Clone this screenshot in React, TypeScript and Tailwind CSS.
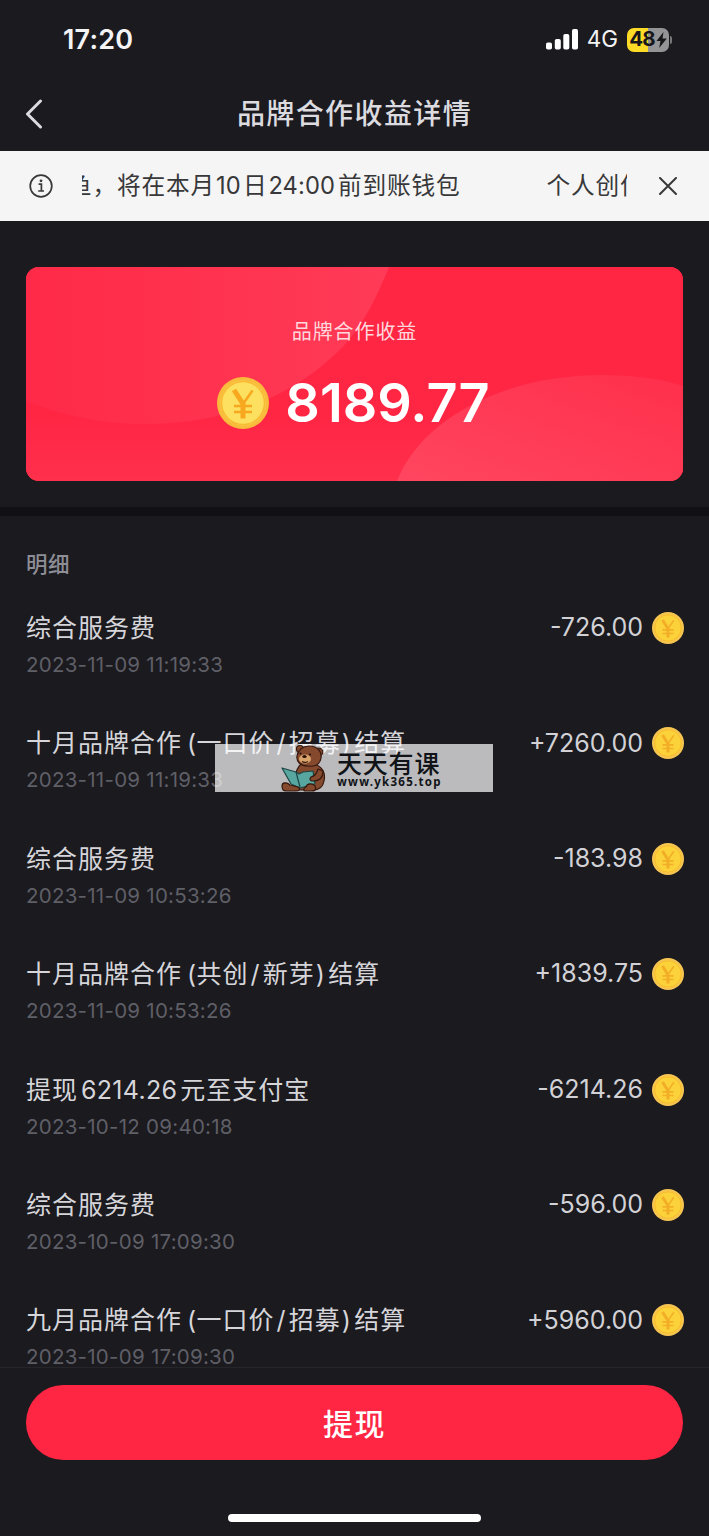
import React from 'react';

type Part = string | { latin: string; gap: string };

const records: { title: Part[]; time: string; amount: string }[] = [
    { title: ['综合服务费'], time: '2023-11-09 11:19:33', amount: '-726.00' },
    {
        title: [
            '十月品牌合作',
            { latin: '(', gap: 'pl-[5px]' },
            '一口价',
            { latin: '/', gap: 'pl-[2px] pr-[3px]' },
            '招募',
            { latin: ')', gap: 'pl-[1px] pr-[3px]' },
            '结算',
        ],
        time: '2023-11-09 11:19:33',
        amount: '+7260.00',
    },
    { title: ['综合服务费'], time: '2023-11-09 10:53:26', amount: '-183.98' },
    {
        title: [
            '十月品牌合作',
            { latin: '(', gap: 'pl-[5px]' },
            '共创',
            { latin: '/', gap: 'pl-[2px] pr-[3px]' },
            '新芽',
            { latin: ')', gap: 'pl-[1px] pr-[3px]' },
            '结算',
        ],
        time: '2023-11-09 10:53:26',
        amount: '+1839.75',
    },
    {
        title: ['提现', { latin: '6214.26', gap: 'px-[3px]' }, '元至支付宝'],
        time: '2023-10-12 09:40:18',
        amount: '-6214.26',
    },
    { title: ['综合服务费'], time: '2023-10-09 17:09:30', amount: '-596.00' },
    {
        title: [
            '九月品牌合作',
            { latin: '(', gap: 'pl-[5px]' },
            '一口价',
            { latin: '/', gap: 'pl-[2px] pr-[3px]' },
            '招募',
            { latin: ')', gap: 'pl-[1px] pr-[3px]' },
            '结算',
        ],
        time: '2023-10-09 17:09:30',
        amount: '+5960.00',
    },
];

function Coin({ className, face = '#fcd23a', rim = '#f6c452', mark = '#f3ae28' }: { className: string; face?: string; rim?: string; mark?: string }) {
    return (
        <svg viewBox="0 0 52 52" className={className} fill="none">
            <circle cx="26" cy="26" r="26" fill={rim} />
            <circle cx="26" cy="26" r="22.5" fill={face} />
            <circle cx="26" cy="26" r="21.5" stroke={mark} strokeWidth="1.5" opacity="0.7" />
            <path d="M26 27l9.5-13.5M17 29h18M17 35h18" stroke={mark} strokeWidth="2.6" />
            <path d="M17 13 26 27v14.5" stroke={mark} strokeWidth="5" />
        </svg>
    );
}

function StatusBar() {
    return (
        <div className="flex h-[76px] items-center justify-between pl-[63px] pr-[37px] pt-[3px]">
            <span className="text-[27px] font-semibold leading-none tracking-[0.2px] text-[#f4f4f4]">17:20</span>
            <div className="flex items-center">
                <svg viewBox="0 0 32 21" className="h-[21px] w-8" fill="#fff">
                    <rect x="0" y="13.5" width="6" height="7" rx="1.8" />
                    <rect x="8.8" y="10" width="6" height="10.5" rx="1.8" />
                    <rect x="17.3" y="5" width="6" height="15.5" rx="1.8" />
                    <rect x="26" y="0" width="6" height="20.5" rx="1.8" />
                </svg>
                <span className="ml-[9px] text-[22.5px] leading-none text-[#f4f4f4]">4G</span>
                <div className="ml-[9px] flex h-6 w-[42px] items-center justify-center rounded-[7px] bg-linear-to-r from-[#fbdb25] from-50% to-[#949496] to-50%">
                    <span className="text-[20.5px] font-bold leading-none tracking-[-0.9px] text-[#17171b]">48</span>
                    <svg viewBox="0 0 11 16" className="ml-px h-4 w-[11px]" fill="#17171b">
                        <path d="M7.5 0 .5 9h4L3.2 16 10.8 6.5H6.5z" />
                    </svg>
                </div>
                <span className="ml-px h-2 w-[2px] rounded-r-full bg-[#77777a]" />
            </div>
        </div>
    );
}

function Notice() {
    return (
        <div className="flex h-[70px] items-center bg-[#f5f5f5] pl-[29px] pr-[32px] text-[#38383a]">
            <svg viewBox="0 0 24 24" className="size-6" fill="none" stroke="currentColor" strokeWidth="1.7">
                <circle cx="12" cy="12" r="10.8" />
                <path d="M9.6 10.2h2.8v6.6M9.2 17h5.8" />
                <circle cx="12" cy="6.8" r="1.4" fill="currentColor" stroke="none" />
            </svg>
            <div className="ml-[29px] flex w-[545px] overflow-hidden whitespace-nowrap text-[23.7px] tracking-[0.8px]">
                <span className="-ml-[14px] mr-px">鱼，将在本月</span>
                <span className="tracking-[0.2px]">10</span>
                <span className="pl-[2px]">日</span>
                <span className="pl-px pr-[3px] tracking-[0.1px]">24:00</span>
                <span>前到账钱包</span>
                <span className="ml-[86px]">个人创作者</span>
            </div>
            <svg viewBox="0 0 18 18" className="ml-auto size-[18px]" stroke="currentColor" strokeWidth="2" strokeLinecap="round">
                <path d="M1 1l16 16M17 1 1 17" />
            </svg>
        </div>
    );
}

function BalanceCard() {
    return (
        <div className="relative mx-[26px] mt-[46px] h-[214px] overflow-hidden rounded-[13px] bg-[#ff2644]">
            <svg viewBox="0 0 657 214" className="absolute inset-0 h-full w-full">
                <defs>
                    <linearGradient id="glow" x1="0" y1="0" x2="1" y2="0">
                        <stop offset="0" stopColor="#ff2a47" />
                        <stop offset="1" stopColor="#ff3b57" />
                    </linearGradient>
                    <linearGradient id="floor" x1="0" y1="0" x2="0" y2="1">
                        <stop offset="0.7" stopColor="#ff2644" />
                        <stop offset="1" stopColor="#ff304c" />
                    </linearGradient>
                    <linearGradient id="hill" x1="1" y1="0" x2="0" y2="1">
                        <stop offset="0" stopColor="#ff2f4b" />
                        <stop offset="1" stopColor="#ff4660" />
                    </linearGradient>
                </defs>
                <rect width="657" height="214" fill="url(#floor)" />
                <path d="M0 0H363C349 34 334 66 306 90C262 131 196 157 122 157C76 157 38 149 0 134Z" fill="url(#glow)" />
                <path d="M371 214C395 152 478 108 576 108C608 108 636 112 657 119V214Z" fill="url(#hill)" />
            </svg>
            <div className="relative flex h-full flex-col items-center">
                <p className="mt-[50px] text-[20px] leading-[30px] tracking-[0.9px] text-[#ffd8dd]">品牌合作收益</p>
                <div className="mt-[29px] flex items-center pr-[2px]">
                    <Coin className="size-[52px]" face="#fde05f" rim="#f8bb3c" mark="#f7a81f" />
                    <span className="ml-[16px] pt-px text-[54px] font-semibold leading-[52px] text-white">8189.77</span>
                </div>
            </div>
        </div>
    );
}

function Watermark() {
    return (
        <div className="absolute left-[215px] top-[744px] flex h-12 w-[278px] bg-white/70 text-[#101418]">
            <svg viewBox="0 0 46 48" className="ml-[66px] h-12 w-[46px]" fill="#85492e" stroke="#35190f" strokeWidth="1.2" strokeLinejoin="round">
                <circle cx="19" cy="5" r="3.5" />
                <circle cx="38" cy="8" r="3.8" />
                <path d="M33 20c8 2 12 9 10 17-1 6-5 9-11 9H14c-2-8 0-20 6-26z" />
                <path d="M28 2c9 0 13 6 12 12-1 7-7 9-13 8-7 0-12-4-11-10 1-6 6-10 12-10z" />
                <ellipse cx="24" cy="15" rx="6" ry="4.6" fill="#d9a36c" stroke="none" />
                <ellipse cx="23.5" cy="12.5" rx="2.2" ry="1.5" fill="#2a130c" stroke="none" />
                <circle cx="19.5" cy="9.5" r="1" fill="#1a0c08" stroke="none" />
                <circle cx="29" cy="10.5" r="1" fill="#1a0c08" stroke="none" />
                <path d="M21 17.5c2 1.3 4 1.2 6 0" fill="none" />
                <path d="M1 24l14 4 3 2 4-2 10-1 2 13-15 4-9-4z" fill="#58a6a0" stroke="#1c4544" />
                <path d="M15 28l4 15" stroke="#1c4544" fill="none" />
                <path d="M42 27c0 7-4 10-10 10-3 0-4-2-2-4 4-1 6-4 7-8z" />
                <path d="M1 42c0-4 5-4 8-1l8 2c3 2 1 4-2 4H5c-3 0-4-2-4-5z" />
                <path d="M25 43c1-4 7-4 9-1 2 4 0 5-4 5h-5c-3 0-3-3 0-4z" />
            </svg>
            <div className="ml-[10px] flex flex-col">
                <span className="mt-[5px] font-['Noto_Sans_CJK_SC'] text-[25px] font-medium leading-[26px] tracking-[0.8px]">天天有课</span>
                <span className="font-['Noto_Sans'] text-[11.5px] font-bold leading-[14px] tracking-[1.25px]">www.yk365.top</span>
            </div>
        </div>
    );
}

export default function App() {
    return (
        <div className="relative flex h-[1536px] w-[709px] flex-col overflow-hidden bg-[#1b1a1f] font-[Inter,'Noto_Sans_CJK_SC',sans-serif]">
            <StatusBar />

            {/* Title bar */}
            <header className="grid h-[75px] grid-cols-[80px_1fr_80px] items-center text-[#dcdce0]">
                <svg viewBox="0 0 18 30" className="ml-[25px] h-[30px] w-[18px]" fill="none" stroke="currentColor" strokeWidth="3" strokeLinecap="round" strokeLinejoin="round">
                    <path d="M15.5 2 2.5 15l13 13" />
                </svg>
                <h1 className="text-center text-[28px] font-medium leading-[40px] tracking-[1.4px]">品牌合作收益详情</h1>
            </header>

            <Notice />
            <BalanceCard />
            <div className="mt-[26px] h-[9px] shrink-0 bg-[#111115]" />

            {/* Records */}
            <main className="flex h-[851px] shrink-0 flex-col overflow-hidden pl-[26px] pr-[25px]">
                <h2 className="mt-[33px] text-[21.5px] font-medium leading-[30px] tracking-[0.5px] text-[#8e8e96]">明细</h2>
                <ul className="mt-[30px]">
                    {records.map((record, row) => (
                        <li key={row} className="flex h-[115.4px] justify-between">
                            <div>
                                <p className="whitespace-nowrap text-[25px] leading-[38px] tracking-[1px] text-[#d6d6da]">
                                    {record.title.map((part, i) =>
                                        typeof part === 'string' ? (
                                            part
                                        ) : (
                                            <span key={i} className={`tracking-[0.3px] ${part.gap}`}>
                                                {part.latin}
                                            </span>
                                        )
                                    )}
                                </p>
                                <p className="mt-[2px] text-[20.5px] leading-[32px] tracking-[0.25px] text-[#5f5f67]">{record.time}</p>
                            </div>
                            <div className="flex h-[38px] items-center">
                                <span className="text-[25px] text-[#d2d2d6]">{record.amount}</span>
                                <Coin className="ml-[9px] size-[32px]" />
                            </div>
                        </li>
                    ))}
                </ul>
            </main>

            {/* Withdraw */}
            <footer className="flex flex-1 flex-col items-center border-t border-[#25252a] px-[26px] pt-[17px]">
                <button className="h-[75px] w-full rounded-full bg-[#ff2644] pt-[3px] text-[30px] font-medium tracking-[1.5px] text-white">提现</button>
                <div className="mt-[54px] h-2 w-[253px] rounded-full bg-white" />
            </footer>

            <Watermark />
        </div>
    );
}
